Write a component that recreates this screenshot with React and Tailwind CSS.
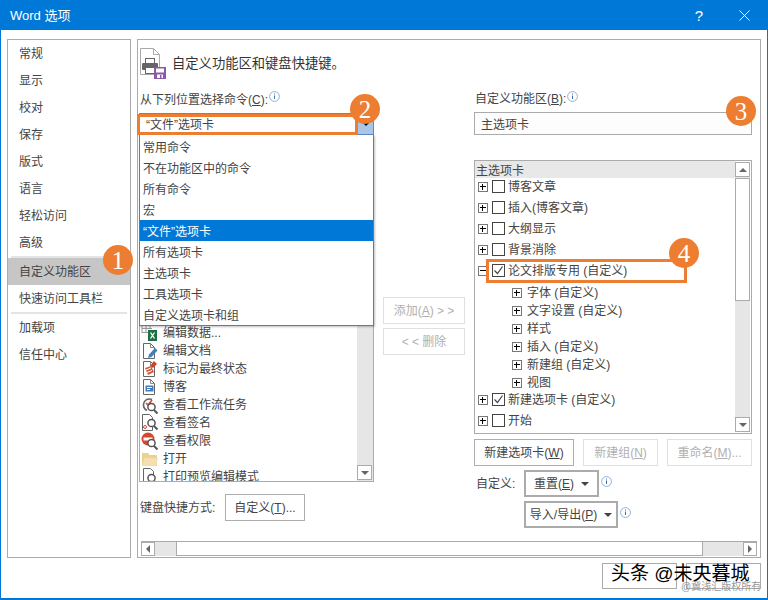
import React from 'react';

const nav = ['常规', '显示', '校对', '保存', '版式', '语言', '轻松访问', '高级'];
const dropItems = ['常用命令', '不在功能区中的命令', '所有命令', '宏', '“文件”选项卡', '所有选项卡', '主选项卡', '工具选项卡', '自定义选项卡和组'];

const Doc = ({children}) => (
    <svg width="18" height="18" viewBox="0 0 18 18" fill="none">
        <path d="M2.5 1.5h7l4 4v11h-11z" stroke="#666" fill="#fff" />
        <path d="M9.5 1.5v4h4" stroke="#888" />
        {children}
    </svg>
);

const Lens = ({x = 0, y = 0}) => (
    <g transform={`translate(${x} ${y})`}>
        <circle cx="10.5" cy="10" r="3.6" fill="#fff" stroke="#555" strokeWidth="1.5" />
        <path d="M13 13l3.5 3.5" stroke="#555" strokeWidth="2" />
    </g>
);

const cmdIcons = [
    <svg key="0" width="18" height="18" viewBox="0 0 18 18" fill="none">
        <path d="M1 0.5h10M1 4.5h10M1 8.5h6M1 0v9M5 0v9M9 0v5" stroke="#999" />
        <rect x="7" y="6" width="9" height="11" fill="#1e7145" />
        <path d="M9.5 8.5l4 6M13.5 8.5l-4 6" stroke="#fff" strokeWidth="1.3" />
    </svg>,
    <Doc key="1"><path d="M7 16l1-3.500 6-6.500 2.500 2.500-6 6.500z" fill="#3f7fbf" /></Doc>,
    <Doc key="2">
        <path d="M4 8l6-2 3 6-6 3z" fill="#d9583b" />
        <path d="M9 6l4-5 3 3-4 4z" fill="#c9452f" />
        <path d="M5 10l5-2M6 12.500l5-2" stroke="#fff" />
    </Doc>,
    <Doc key="3">
        <rect x="4.500" y="7.500" width="8" height="6" fill="#3f7fbf" />
        <path d="M6 9.500h5M6 11.500h3" stroke="#fff" />
    </Doc>,
    <svg key="4" width="18" height="18" viewBox="0 0 18 18" fill="none">
        <path d="M11 3.500a6 6 0 1 0-5 11" stroke="#666" strokeWidth="1.600" />
        <path d="M5 7l2 2 4-5" stroke="#d9432f" strokeWidth="1.600" />
        <Lens x="0" y="1" />
    </svg>,
    <svg key="5" width="18" height="18" viewBox="0 0 18 18" fill="none">
        <path d="M1.500 0.500h7l3 3v13h-10z" stroke="#666" fill="#fff" />
        <circle cx="4" cy="13" r="1.500" stroke="#d9432f" />
        <Lens x="0" y="-1" />
    </svg>,
    <svg key="6" width="18" height="18" viewBox="0 0 18 18" fill="none">
        <circle cx="7" cy="7" r="6.500" fill="#d5472f" />
        <rect x="2.500" y="5.500" width="9" height="3" fill="#fff" />
        <Lens x="0" y="1" />
    </svg>,
    <svg key="7" width="18" height="18" viewBox="0 0 18 18" fill="none">
        <path d="M1 16V3h6l1.500 2H16v11z" fill="#eed08f" />
        <path d="M1 16l2.500-8H17l-2 8z" fill="#f5dfb0" />
    </svg>,
    <svg key="8" width="18" height="18" viewBox="0 0 18 18" fill="none">
        <path d="M2.500 0.500h7l3 3v13h-10z" stroke="#666" fill="#fff" />
        <Lens x="0" y="0" />
    </svg>,
];
const cmds = ['编辑数据...', '编辑文档', '标记为最终状态', '博客', '查看工作流任务', '查看签名', '查看权限', '打开', '打印预览编辑模式'];

const Info = () => (
    <svg width="11" height="11" viewBox="0 0 11 11" fill="none" className="shrink-0">
        <circle cx="5.500" cy="5.500" r="4.900" stroke="#8fb0dc" />
        <path d="M5.500 2.500v1M5.500 4.500v3.500" stroke="#3f6fb0" />
    </svg>
);

const Badge = ({n, className}) => (
    <div className={`absolute z-30 w-[30px] h-[30px] rounded-full bg-[#ed7d31] text-white flex items-center justify-center text-[25px] leading-none font-['Liberation_Serif',serif] ${className}`}>{n}</div>
);

const Tri = ({className}) => <span className={`inline-block w-0 h-0 ${className}`}></span>;

const Expander = ({open}) => (
    <span className="relative w-[10px] h-[10px] border border-[#777] bg-white shrink-0">
        <span className="absolute left-[1px] top-[3px] w-[6px] h-px bg-black"></span>
        {!open && <span className="absolute left-[3px] top-[1px] w-px h-[6px] bg-black"></span>}
    </span>
);

const Check = ({checked}) => (
    <span className="w-[13px] h-[13px] border border-[#444] bg-white shrink-0 flex items-center justify-center">
        {checked && (
            <svg width="11" height="11" viewBox="0 0 11 11" fill="none"><path d="M1.500 5.500l3 3 5-7" stroke="#444" strokeWidth="1.200" /></svg>
        )}
    </span>
);

const TopRow = ({label, checked, open}) => (
    <div className="h-[21px] flex items-center pl-[3px]">
        <Expander open={open} />
        <span className="ml-[4px]"><Check checked={checked} /></span>
        <span className="ml-[3px] whitespace-nowrap">{label}</span>
    </div>
);

const ChildRow = ({label}) => (
    <div className="h-[18px] flex items-center pl-[37px]">
        <Expander />
        <span className="ml-[5px] whitespace-nowrap">{label}</span>
    </div>
);

const Btn = ({children, className, disabled}) => (
    <div className={`h-[27px] flex items-center justify-center whitespace-nowrap border ${disabled ? 'border-[#e0e0e0] text-[#b0b0b0]' : 'border-[#adadad] text-[#444]'} ${className}`}>{children}</div>
);

const Key = ({children}) => <span className="underline">{children}</span>;

const App = () => {
    return (
        <div className="relative w-[768px] h-[600px] overflow-hidden bg-white flex flex-col border-l border-r border-b-2 border-[#0078d7] text-[12px] leading-none text-[#444] font-['Liberation_Sans','Noto_Sans_CJK_SC',sans-serif]">
            <div className="h-[30px] shrink-0 -mx-px bg-[#0078d7] text-white flex items-center pl-[10px] text-[12px]">
                <span className="text-[13px]">Word 选项</span>
                <span className="ml-auto text-[15px]">?</span>
                <svg width="11" height="11" viewBox="0 0 11 11" fill="none" className="ml-[36px] mr-[18px]"><path d="M0.500 0.500l10 10M10.500 0.500l-10 10" stroke="#fff" /></svg>
            </div>

            <div className="flex gap-[6px] pl-[6px] pt-[9px]">
                {/* left nav */}
                <div className="w-[124px] h-[519px] border border-[#ababab] shrink-0">
                    {nav.map((n) => (
                        <div key={n} className="h-[27px] flex items-center pl-[11px]">{n}</div>
                    ))}
                    <div className="h-[2px] mx-[3px] bg-[#e4e4e4]"></div>
                    <div className="h-[27px] bg-[#c6c6c6] flex items-center pl-[11px]">自定义功能区</div>
                    <div className="h-[27px] flex items-center pl-[11px]">快速访问工具栏</div>
                    <div className="h-[2px] mx-[3px] bg-[#e4e4e4]"></div>
                    <div className="h-[27px] flex items-center pl-[11px]">加载项</div>
                    <div className="h-[27px] flex items-center pl-[11px]">信任中心</div>
                </div>

                {/* main panel */}
                <div className="relative w-[624px] h-[519px] border border-[#ababab] shrink-0 flex flex-col">
                    <div className="h-[50px] pt-[8px] flex items-start pl-[1px]">
                        <svg width="28" height="31" viewBox="0 0 28 31" fill="none">
                            <path d="M1.500 0.500h13l6 6v20h-19z" fill="#fff" stroke="#aaa" />
                            <path d="M14.500 0.500v6h6" stroke="#aaa" />
                            <rect x="6.500" y="10.500" width="9" height="5" fill="#fff" stroke="#666" />
                            <rect x="3" y="15" width="16" height="7" rx="1" fill="#666" />
                            <rect x="6.500" y="19.500" width="9" height="6" fill="#fff" stroke="#666" />
                            <rect x="15" y="19" width="12" height="12" fill="#8a5aa8" />
                            <rect x="17" y="20.500" width="8" height="4" fill="#fff" />
                            <rect x="18" y="26.500" width="6" height="3.500" fill="#fff" />
                            <rect x="21" y="27" width="1.500" height="3" fill="#8a5aa8" />
                        </svg>
                        <span className="ml-[5px] mt-[9px] text-[13.300px] text-[#333] whitespace-nowrap">自定义功能区和键盘快捷键。</span>
                    </div>

                    <div className="flex pl-[1px]">
                        {/* left column */}
                        <div className="relative w-[235px] shrink-0">
                            <div className="h-[23px] flex items-start pt-[4px] pl-px gap-px">
                                <span className="whitespace-nowrap">从下列位置选择命令(<Key>C</Key>):</span>
                                <span className="-mt-[3px]"><Info /></span>
                            </div>
                            <div className="h-[22px] border border-[#5b8ac4] flex">
                                <div className="flex-1 flex items-center pl-[6px] pt-[2px]">“文件”选项卡</div>
                                <div className="w-[15px] bg-[#a9c6e8] flex items-center justify-center">
                                    <Tri className="border-x-[3px] border-x-transparent border-t-[3px] border-t-black" />
                                </div>
                            </div>
                            <div className="relative h-[347px] border border-[#ababab] border-t-0 overflow-hidden">
                                <div className="absolute left-0 right-[16px] -bottom-[5px] flex flex-col">
                                    {cmds.map((c, i) => (
                                        <div key={c} className="h-[18px] flex items-center pl-[1px]">
                                            <span className="w-[18px] h-[18px] shrink-0">{cmdIcons[i]}</span>
                                            <span className="ml-[4px] whitespace-nowrap">{c}</span>
                                        </div>
                                    ))}
                                </div>
                                <div className="absolute right-0 top-0 bottom-0 w-[16px] bg-[#e6e6e6]"></div>
                                <div className="absolute right-px bottom-px w-[15px] h-[15px] bg-white border border-[#ababab] flex items-center justify-center">
                                    <Tri className="border-x-[4px] border-x-transparent border-t-[4px] border-t-[#666]" />
                                </div>
                            </div>
                            <div className="mt-[12px] flex items-center h-[27px] pl-px">
                                <span className="w-[85px]">键盘快捷方式:</span>
                                <Btn className="w-[80px]">自定义(<Key>T</Key>)...</Btn>
                            </div>

                            {/* open dropdown */}
                            <div className="absolute z-10 left-0 top-[45px] w-[235px] h-[191px] bg-white border border-[#777] border-t-0 shadow-[1px_1px_2px_rgba(0,0,0,0.25)] pt-px">
                                {dropItems.map((d, i) => (
                                    <div key={d} className={`h-[21px] flex items-center pl-[3px] pt-[2px] ${i === 4 ? 'bg-[#0078d7] text-white' : ''}`}>{d}</div>
                                ))}
                            </div>
                            {/* highlight over the combo */}
                            <div className="absolute z-20 -left-[2px] top-[24px] w-[221px] h-[21px] border-[3px] border-[#ed7d31]"></div>
                        </div>

                        {/* middle buttons */}
                        <div className="ml-[9px] w-[82px] shrink-0 pt-[207px] flex flex-col gap-[4px]">
                            <Btn disabled>添加(<Key>A</Key>) &gt; &gt;</Btn>
                            <Btn disabled>&lt; &lt; 删除</Btn>
                        </div>

                        {/* right column */}
                        <div className="relative ml-[9px] w-[278px] shrink-0">
                            <div className="h-[22px] flex items-start pt-[3px] pl-px gap-px">
                                <span className="whitespace-nowrap">自定义功能区(<Key>B</Key>):</span>
                                <span className="-mt-[2px]"><Info /></span>
                            </div>
                            <div className="h-[23px] border border-[#ababab] flex items-center pl-[6px] pt-[2px] bg-[#fdfdfd]">主选项卡</div>

                            <div className="relative mt-[25px] h-[274px] border border-[#ababab] overflow-hidden">
                                <div className="h-[17px] mr-[16px] bg-[#e8e8e8] flex items-center pl-px pt-[2px]">主选项卡</div>
                                <div className="-mt-[2px]">
                                    <TopRow label="博客文章" />
                                    <TopRow label="插入(博客文章)" />
                                    <TopRow label="大纲显示" />
                                    <TopRow label="背景消除" />
                                    <TopRow label="论文排版专用 (自定义)" checked open />
                                    <div className="pt-[3px]">
                                        <ChildRow label="字体 (自定义)" />
                                        <ChildRow label="文字设置 (自定义)" />
                                        <ChildRow label="样式" />
                                        <ChildRow label="插入 (自定义)" />
                                        <ChildRow label="新建组 (自定义)" />
                                        <ChildRow label="视图" />
                                    </div>
                                    <div className="-mt-[3px]">
                                        <TopRow label="新建选项卡 (自定义)" checked />
                                        <TopRow label="开始" />
                                    </div>
                                </div>
                                {/* scrollbar */}
                                <div className="absolute right-px top-px bottom-px w-[15px] bg-[#e6e6e6] flex flex-col">
                                    <div className="h-[15px] bg-white border border-[#ababab] flex items-center justify-center">
                                        <Tri className="border-x-[4px] border-x-transparent border-b-[4px] border-b-[#666]" />
                                    </div>
                                    <div className="h-[123px] mt-px bg-white border border-[#ababab]"></div>
                                    <div className="mt-auto h-[15px] bg-white border border-[#ababab] flex items-center justify-center">
                                        <Tri className="border-x-[4px] border-x-transparent border-t-[4px] border-t-[#666]" />
                                    </div>
                                </div>
                            </div>

                            <div className="mt-[5px] flex justify-between">
                                <Btn className="w-[100px]">新建选项卡(<Key>W</Key>)</Btn>
                                <Btn disabled className="w-[75px]">新建组(<Key>N</Key>)</Btn>
                                <Btn disabled className="w-[85px]">重命名(<Key>M</Key>)...</Btn>
                            </div>

                            <div className="mt-[4px] flex items-center pl-[2px]">
                                <span className="w-[48px]">自定义:</span>
                                <div className="w-[75px] h-[27px] border-2 border-[#ababab] flex items-center justify-center gap-[7px]">
                                    <span>重置(<Key>E</Key>)</span>
                                    <Tri className="border-x-[4px] border-x-transparent border-t-[4px] border-t-[#444]" />
                                </div>
                                <span className="ml-[2px] -mt-[5px]"><Info /></span>
                            </div>
                            <div className="mt-[4px] flex items-center pl-[50px]">
                                <div className="w-[94px] h-[27px] border-2 border-[#ababab] flex items-center justify-center gap-[7px]">
                                    <span>导入/导出(<Key>P</Key>)</span>
                                    <Tri className="border-x-[4px] border-x-transparent border-t-[4px] border-t-[#444]" />
                                </div>
                                <span className="ml-[2px] -mt-[5px]"><Info /></span>
                            </div>
                        </div>
                    </div>

                    {/* bottom scrollbar */}
                    <div className="mt-auto mb-px mx-[3px] h-[15px] flex bg-[#e6e6e6] border-t border-[#ababab]">
                        <div className="w-[14px] bg-white border border-[#ababab] flex items-center justify-center">
                            <Tri className="border-y-[4px] border-y-transparent border-r-[4px] border-r-[#666]" />
                        </div>
                        <div className="ml-[21px] w-[527px] bg-white border-x border-b border-[#ababab]"></div>
                        <div className="ml-auto w-[14px] bg-white border border-[#ababab] flex items-center justify-center">
                            <Tri className="border-y-[4px] border-y-transparent border-l-[4px] border-l-[#666]" />
                        </div>
                    </div>
                </div>
            </div>

            {/* annotations */}
            <Badge n="1" className="left-[102px] top-[245px]" />
            <Badge n="2" className="left-[349px] top-[94px]" />
            <Badge n="3" className="left-[725px] top-[96px]" />
            <Badge n="4" className="left-[668px] top-[238px]" />
            <div className="absolute z-20 left-[485px] top-[259px] w-[201px] h-[24px] border-[3px] border-[#ed7d31]"></div>

            {/* watermark */}
            <div className="absolute left-[601px] top-[563px] w-[75px] h-[26px] border border-[#ababab]"></div>
            <div className="absolute left-[685px] top-[563px] w-[75px] h-[26px] border border-[#ababab]"></div>
            <div className="absolute left-[610px] top-[562px] text-[19px] leading-[24px] text-black whitespace-nowrap">头条 @未央暮城</div>
            <div className="absolute left-[680px] top-[582px] text-[10px] leading-[10px] text-[#999] whitespace-nowrap">@冀浅汇版权所有</div>
        </div>
    );
}

export default App;
